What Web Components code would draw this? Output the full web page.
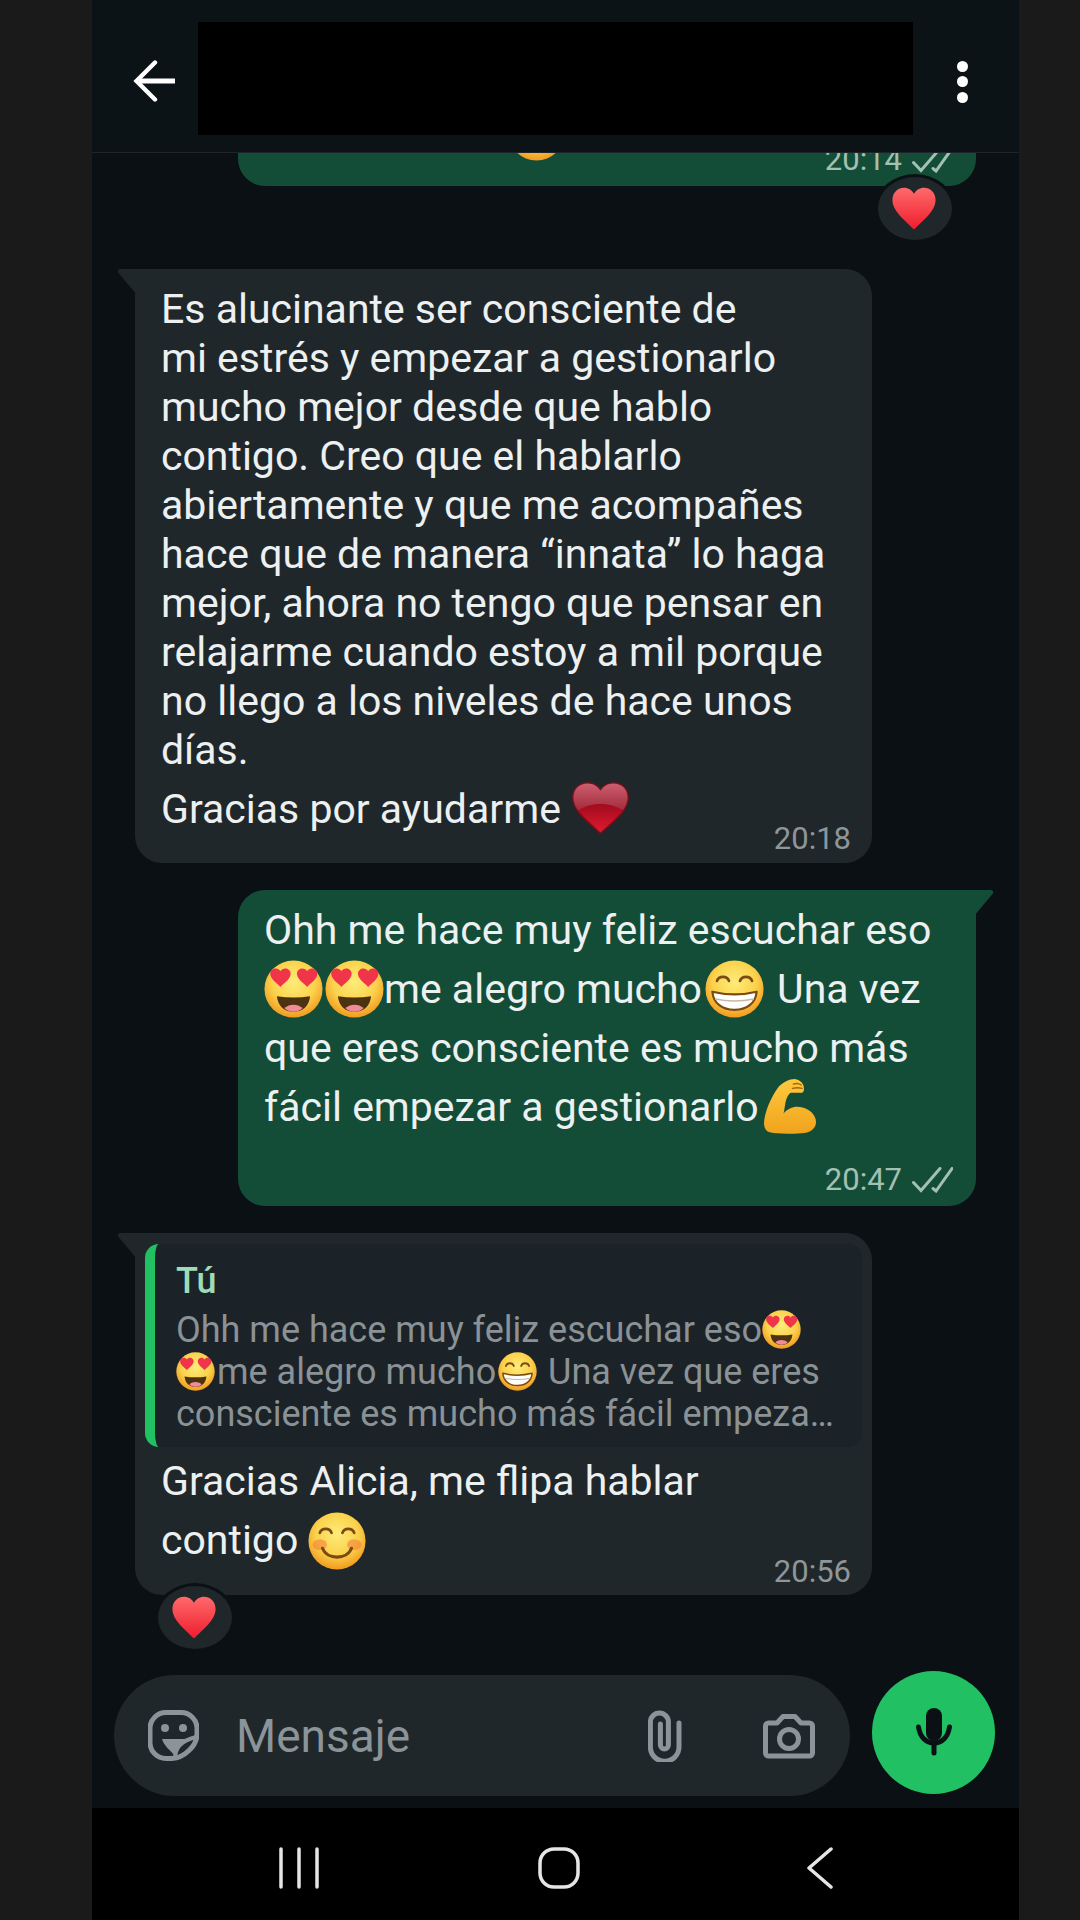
<!DOCTYPE html>
<html lang="es">
<head>
<meta charset="utf-8">
<title>Chat</title>
<style>
  html, body { margin: 0; height: 100%; background: #1a1a1a; overflow: hidden; }
</style>
</head>
<body>
<wa-phone>
  <wa-header slot="header"></wa-header>

  <wa-bubble type="out" time="20:14" ticks style="--pt:0px;--meta-mt:-19px;--pb:8px;margin-top:-84px">
    <div style="height:92px;padding-left:244px;display:flex;align-items:flex-end"><wa-emoji name="smile" size="57" style="vertical-align:0"></wa-emoji></div>
  </wa-bubble>
  <wa-reaction side="right"></wa-reaction>

  <wa-bubble type="in" time="20:18" style="--pt:16px;--meta-mt:-18px;--pb:6px;--lh:49px;margin-top:26px">
    Es alucinante ser consciente de<br>
    mi estrés y empezar a gestionarlo<br>
    mucho mejor desde que hablo<br>
    contigo. Creo que el hablarlo<br>
    abiertamente y que me acompañes<br>
    hace que de manera “innata” lo haga<br>
    mejor, ahora no tengo que pensar en<br>
    relajarme cuando estoy a mil porque<br>
    no llego a los niveles de hace unos<br>
    días.
    <div style="line-height:60px;margin-top:4px">Gracias por ayudarme <wa-emoji name="gloss" size="59" tall="53" style="vertical-align:-12px"></wa-emoji></div>
  </wa-bubble>

  <wa-bubble type="out" time="20:47" ticks style="--pt:11px;--meta-mt:25px;--pb:8px;--lh:59px;margin-top:27px">
    Ohh me hace muy feliz escuchar eso<br>
    <wa-emoji name="love" size="59" tall="58"></wa-emoji><wa-emoji name="love" size="59" tall="58" style="margin-left:2px"></wa-emoji>me alegro mucho<wa-emoji name="beam" size="59" tall="58" style="margin:0 3px"></wa-emoji> Una vez<br>
    que eres consciente es mucho más<br>
    fácil empezar a gestionarlo<wa-emoji name="muscle" size="52" tall="55" style="vertical-align:-13px;margin-left:5px"></wa-emoji>
  </wa-bubble>

  <wa-bubble type="in" time="20:56" style="--pt:11px;--px:10px;--meta-mt:-16px;--pb:5px;--lh:59px;margin-top:27px">
    <wa-quote name="Tú">
      Ohh me hace muy feliz escuchar eso<wa-emoji name="love" size="39" style="vertical-align:-7px"></wa-emoji><br>
      <wa-emoji name="love" size="39" style="vertical-align:-7px;margin-right:2px"></wa-emoji>me alegro mucho<wa-emoji name="beam" size="39" style="vertical-align:-7px;margin:0 2px"></wa-emoji> Una vez que eres<br>
      consciente es mucho más fácil empeza…
    </wa-quote>
    <div style="margin:5px 0 0 16px">Gracias Alicia, me flipa hablar<br>contigo <wa-emoji name="smile" size="58" style="vertical-align:-16px"></wa-emoji></div>
  </wa-bubble>
  <wa-reaction side="left"></wa-reaction>

  <wa-composer slot="composer"></wa-composer>
  <wa-navbar slot="nav"></wa-navbar>
</wa-phone>

<script>
// small helper, every element below is the same pattern: template + open shadow root
function define(tag, html, setup) {
  const tpl = document.createElement('template');
  tpl.innerHTML = html;
  customElements.define(tag, class extends HTMLElement {
    constructor() {
      super();
      this.attachShadow({ mode: 'open' }).appendChild(tpl.content.cloneNode(true));
    }
    connectedCallback() { setup?.(this, this.shadowRoot); }
  });
}

define('wa-phone', `
  <style>
    :host {
      display: flex; flex-direction: column;
      width: 927px; height: 1920px; margin-left: 92px;
      background: #0b1014; color: #edf0f1;
      font: 400 41px/49px Roboto, "Liberation Sans", sans-serif;
    }
    .chat { flex: 1; min-height: 0; overflow: hidden; display: flex; flex-direction: column; }
  </style>
  <slot name="header"></slot>
  <div class="chat"><slot></slot></div>
  <slot name="composer"></slot>
  <slot name="nav"></slot>
`);

define('wa-header', `
  <style>
    :host {
      display: flex; align-items: center; flex: none; box-sizing: border-box;
      height: 153px; padding: 5px 0 0 41px;
      background: #0c1317; border-bottom: 1px solid #1d2528;
    }
    .back { display: block; width: 42px; height: 42px; margin-top: 5px; }
    .title { width: 715px; height: 113px; margin-left: 23px; background: #000; }
    .more { display: flex; flex-direction: column; gap: 4.5px; margin: 6px 0 0 44px; }
    .more i { display: block; width: 11px; height: 11px; border-radius: 50%; background: #fff; }
  </style>
  <svg class="back" viewBox="0 0 42 42" fill="none" stroke="#fff" stroke-width="5">
    <path d="M42 21H4" /><path d="M22 2.5 3.5 21 22 39.5" stroke-linecap="round" stroke-width="4.4"/>
  </svg>
  <div class="title"></div>
  <div class="more"><i></i><i></i><i></i></div>
`);

define('wa-bubble', `
  <style>
    :host {
      display: block; flex: none; box-sizing: border-box; position: relative;
      white-space: nowrap;
      padding: var(--pt, 12px) var(--px, 26px) var(--pb, 6px);
      line-height: var(--lh, 49px);
      border-radius: 27px;
    }
    :host([type="in"])  { width: 737px; margin-left: 43px; background: #1f272a; border-top-left-radius: 0; }
    :host([type="out"]) { width: 738px; margin-left: 146px; background: #144d37; border-top-right-radius: 0; }
    .tail { position: absolute; top: 0; width: 20px; height: 26px; }
    :host([type="in"]) .tail  { left: -18px; fill: #1f272a; }
    :host([type="out"]) .tail { right: -18px; fill: #144d37; transform: scaleX(-1); }
    .meta {
      display: flex; justify-content: flex-end; align-items: center; gap: 10px;
      height: 36px; margin-top: var(--meta-mt, 0);
      font-size: 31px; line-height: 36px; color: #8e9699;
    }
    :host([type="in"]) .meta { margin-right: calc(var(--px, 26px) * -1 + 21px); }
    :host([type="out"]) .meta { margin-right: -3px; color: #a2c0b3; }
    .ticks { display: none; width: 41px; height: 26px; }
    :host([ticks]) .ticks { display: block; }
  </style>
  <svg class="tail" viewBox="0 0 20 26"><path d="M20 0H4C1 0 0 2 1.5 4L20 26Z"/></svg>
  <slot></slot>
  <div class="meta"><span class="time"></span>
    <svg class="ticks" viewBox="0 0 41 26" fill="none" stroke="#a2c0b3" stroke-width="3" stroke-linecap="round">
      <path d="M1.5 15.5 9 23.5 28 1.5"/><path d="M21 21.5 24 24 40 1.5"/>
    </svg>
  </div>
`, (el, root) => {
  root.querySelector('.time').textContent = el.getAttribute('time');
});

define('wa-quote', `
  <style>
    :host {
      display: block; box-sizing: border-box; height: 203px;
      padding: 10px 0 0 21px; overflow: hidden;
      background: #1b2329; border-left: 10px solid #21c063; border-radius: 14px;
      font-size: 36px; line-height: 42px; color: #8b9295;
    }
    .name { font-weight: 500; color: #9fdcb5; font-size: 36px; line-height: 54px; margin-bottom: 1px; }
  </style>
  <div class="name"></div>
  <slot></slot>
`, (el, root) => {
  root.querySelector('.name').textContent = el.getAttribute('name');
});

define('wa-reaction', `
  <style>
    :host {
      display: flex; flex: none; align-items: center; justify-content: center;
      box-sizing: border-box; width: 80px; height: 69px; margin-top: -12px; padding-right: 3px; position: relative;
      background: #1f272a; border: 3px solid #0b1014; border-radius: 50%;
    }
    :host([side="right"]) { margin-left: 783px; }
    :host([side="left"])  { margin-left: 63px; }
  </style>
  <wa-emoji name="heart" size="46" tall="44"></wa-emoji>
`);

const faceDefs = `
  <defs><radialGradient id="f" cx="50%" cy="38%" r="62%">
    <stop offset="0" stop-color="#fdec7a"/><stop offset=".6" stop-color="#fbd24c"/><stop offset="1" stop-color="#f19a1f"/>
  </radialGradient></defs>
  <circle cx="32" cy="32" r="31.5" fill="url(#f)"/>`;
const eyeArcs = `<path d="M13 23c2-6 11-6 13 0M38 23c2-6 11-6 13 0" fill="none" stroke="#7b4a12" stroke-width="3" stroke-linecap="round"/>`;
const heartPath = 'M32 56C20 44 2 32 2 17 2 7 10 1 18 1c6 0 11 3 14 8 3-5 8-8 14-8 8 0 16 6 16 16 0 15-18 27-30 39Z';

const emojiArt = {
  love: `${faceDefs}
    <path transform="translate(6 9) scale(.37)" d="${heartPath}" fill="#f0354a"/>
    <path transform="translate(35 9) scale(.37)" d="${heartPath}" fill="#f0354a"/>
    <path d="M14 40c12 2 24 2 36 0-1 11-8 17-18 17s-17-6-18-17Z" fill="#4c3210"/>
    <path d="M22 53c6-5 14-5 20 0-3 3-6 4-10 4s-7-1-10-4Z" fill="#f08c9a"/>`,
  beam: `${faceDefs}${eyeArcs}
    <path d="M8 35c16 4 32 4 48 0-1 13-11 20-24 20S9 48 8 35Z" fill="#fff" stroke="#7b4a12" stroke-width="2.4" stroke-linejoin="round"/>
    <path d="M11 43c14 3 28 3 42 0" fill="none" stroke="#c9b9a0" stroke-width="1.8"/>`,
  smile: `${faceDefs}
    <ellipse cx="13" cy="36" rx="8" ry="6" fill="#f47a3a" opacity=".55"/>
    <ellipse cx="51" cy="36" rx="8" ry="6" fill="#f47a3a" opacity=".55"/>
    ${eyeArcs}
    <path d="M16 40c5 13 27 13 32 0" fill="none" stroke="#7b4a12" stroke-width="3.4" stroke-linecap="round"/>`,
  muscle: `<defs><linearGradient id="m" x1="0" y1="0" x2="0" y2="1">
      <stop offset="0" stop-color="#fdc93e"/><stop offset="1" stop-color="#f0a31c"/></linearGradient></defs>
    <path d="M38 0C44 1 49 5 49 10 50 14 48 17 44 16L33 16C29 18 27 24 26 30 25 34 25 38 24 40 30 34 38 31 46 33 56 35 64 42 64 50 64 58 56 63 46 63 32 64 16 64 7 62 2 61 0 56 0 51 1 38 8 22 18 9 23 4 31 0 38 0Z" fill="url(#m)"/>
    <path d="M36 6c3-1 7-1 10 1M35 11c4-1 8-1 12 0" fill="none" stroke="#a8640f" stroke-width="1.6" stroke-linecap="round"/>`,
  heart: `<defs><linearGradient id="r" x1="0" y1="0" x2="0" y2="1">
      <stop offset="0" stop-color="#ff6a6a"/><stop offset="1" stop-color="#ee1c2e"/></linearGradient></defs>
    <path d="${heartPath}" fill="url(#r)"/>`,
  gloss: `<defs>
      <linearGradient id="g" x1="0" y1="0" x2="0" y2="1">
        <stop offset="0" stop-color="#8c0a1a"/><stop offset=".45" stop-color="#a20d20"/><stop offset="1" stop-color="#e3182f"/></linearGradient>
      <linearGradient id="h" x1="0" y1="0" x2="0" y2="1">
        <stop offset="0" stop-color="#cb5f6e"/><stop offset="1" stop-color="#a22a3b"/></linearGradient></defs>
    <path d="${heartPath}" fill="url(#g)" stroke="#8a0a1a" stroke-width="1.4"/>
    <path d="M2.700 17C2.700 7 10 1.700 18 1.700c6 0 11 3 14 8 3-5 8-8 14-8 8 0 15.300 5.300 15.300 15.300 0 5-2 10-5 14C50 27 42 24 32 24S14 27 7.700 31C4.700 27 2.700 22 2.700 17Z" fill="url(#h)"/>`,
};

class WaEmoji extends HTMLElement {
  constructor() { super(); this.attachShadow({ mode: 'open' }); }
  connectedCallback() {
    const w = +this.getAttribute('size');
    const h = +(this.getAttribute('tall') || w);
    const name = this.getAttribute('name');
    const vb = name === 'gloss' || name === 'heart' ? '0 0 64 58' : '0 0 64 64';
    this.shadowRoot.innerHTML = `<style>
      :host { display: inline-block; width: ${w}px; height: ${h}px; vertical-align: -15px; }
      svg { display: block; width: 100%; height: 100%; }
    </style><svg viewBox="${vb}" preserveAspectRatio="none">${emojiArt[name]}</svg>`;
  }
}
customElements.define('wa-emoji', WaEmoji);

define('wa-composer', `
  <style>
    :host {
      display: flex; flex: none; align-items: flex-start; gap: 22px; box-sizing: border-box;
      height: 137px; padding: 0 24px 0 22px;
    }
    .pill {
      flex: 1; display: flex; align-items: center; height: 121px; margin-top: 4px;
      padding: 0 35px 0 34px; border-radius: 61px; background: #1f272a; color: #8b9498;
    }
    .pill svg { display: block; flex: none; fill: none; stroke: #8b9498; stroke-width: 5; stroke-linejoin: round; stroke-linecap: round; }
    .label { margin-left: 37px; font-size: 46px; line-height: 60px; }
    .clip { margin-left: auto; margin-right: 81px; }
    .mic {
      display: flex; align-items: center; justify-content: center; flex: none;
      width: 123px; height: 123px; padding-bottom: 4px; box-sizing: border-box;
      border-radius: 50%; background: #21c063;
    }
  </style>
  <div class="pill">
    <svg width="51" height="51" viewBox="0 0 51 51">
      <path d="M18 2.5H33a16 16 0 0 1 16 16V24C49 36 36 48 24 48.5H18a16 16 0 0 1-16-16V18.500a16 16 0 0 1 16-16Z"/>
      <path d="M27 47c1-9 5-16 21-20" stroke-width="4"/>
      <path d="M14 29H42C36 30 32 33 30 36L27 46C22 40 16 36 14 29Z" fill="#8b9498" stroke="none"/>
      <circle cx="17" cy="18" r="4" fill="#8b9498" stroke="none"/><circle cx="35" cy="18" r="4" fill="#8b9498" stroke="none"/>
    </svg>
    <span class="label">Mensaje</span>
    <svg class="clip" width="34" height="52" viewBox="0 0 34 52">
      <path d="M31 13V37a14.3 14.3 0 0 1-28.600 0V12a9 9 0 0 1 18 0V35a4 4 0 0 1-8 0V14"/>
    </svg>
    <svg width="52" height="46" viewBox="0 0 52 46">
      <path d="M2.500 13a3 3 0 0 1 3-3H14L20 3.500H32L38 10H46.500a3 3 0 0 1 3 3V40a3 3 0 0 1-3 3H5.500a3 3 0 0 1-3-3Z"/>
      <circle cx="26" cy="26" r="9.500"/>
    </svg>
  </div>
  <div class="mic">
    <svg width="40" height="50" viewBox="0 0 40 50" fill="none" stroke="#0b1014" stroke-width="5" stroke-linecap="round">
      <rect x="12" y="2" width="16" height="33" rx="8" fill="#0b1014" stroke="none"/>
      <path d="M4.500 21C6 31 12 37 20 37S34 31 35.500 21"/><path d="M20 37V47"/>
    </svg>
  </div>
`);

define('wa-navbar', `
  <style>
    :host { display: flex; flex: none; align-items: flex-start; height: 112px; background: #000; padding: 39px 0 0 187px; box-sizing: border-box; }
    svg { display: block; flex: none; fill: none; stroke: #e6e6e6; stroke-width: 3.5; stroke-linecap: round; stroke-linejoin: round; }
    .home { margin-left: 219px; }
    .nav-back { margin-left: 226px; }
  </style>
  <svg width="40" height="42" viewBox="0 0 40 42"><path d="M2 2V40M20 2V40M38 2V40"/></svg>
  <svg class="home" width="42" height="42" viewBox="0 0 42 42"><rect x="2" y="2" width="38" height="38" rx="14"/></svg>
  <svg class="nav-back" width="28" height="42" viewBox="0 0 28 42"><path d="M25 2 3 21 25 40"/></svg>
`);
</script>
</body>
</html>
